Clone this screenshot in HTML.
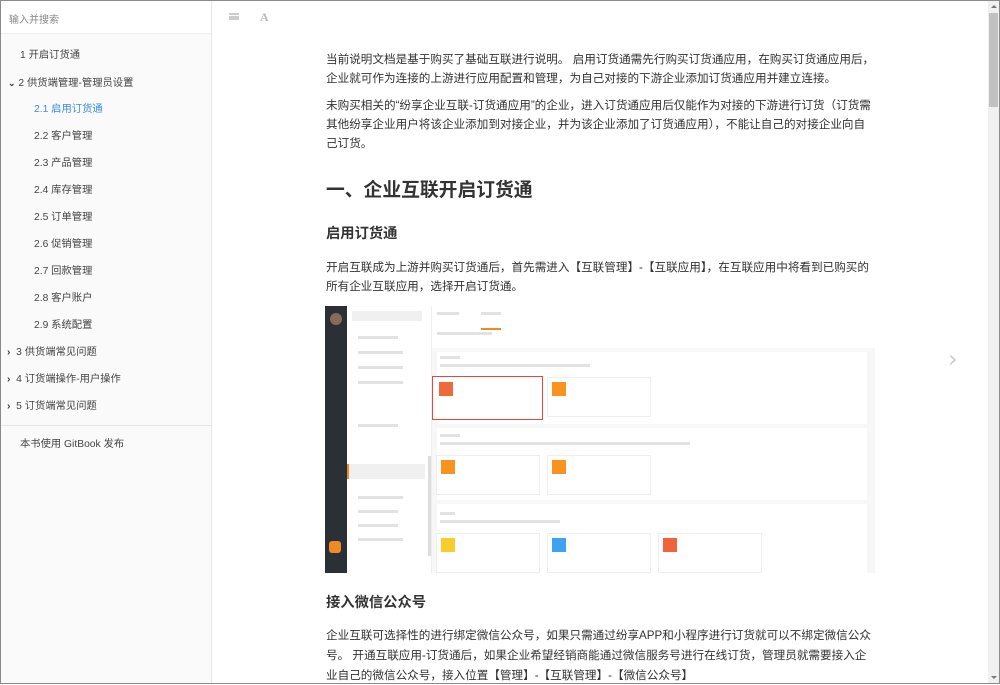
<!DOCTYPE html>
<html><head><meta charset="utf-8"><style>
*{margin:0;padding:0;box-sizing:border-box}
body{width:1000px;height:684px;overflow:hidden;background:#fff;font-family:"Liberation Sans","Noto Sans CJK SC",sans-serif;position:relative;color:#333}
.frame{position:absolute;inset:0;border:1px solid #8a8a8a;pointer-events:none;z-index:10}
.side{position:absolute;left:0;top:0;width:212px;height:684px;background:#fafafa;border-right:1px solid #e6e6e6}
.search{height:34px;background:#fff;border-bottom:1px solid #eee;font-size:10px;color:#888;padding:11px 0 0 9px}
.it{position:absolute;font-size:10.3px;color:#444;white-space:nowrap;line-height:16px}
.ab{position:absolute;white-space:nowrap}
.l{position:absolute;left:326px;font-size:11.6px;line-height:18px;white-space:nowrap;color:#333}
.sb{position:absolute;right:1px;top:1px;width:11px;height:682px;background:#f0f0f0}
.img div{position:absolute}
.g{background:#e2e2e2;height:3px}
</style></head><body>
<div class="side">
<div class="search">输入并搜索</div>
<div class="it" style="left:20px;top:48px">1 开启订货通</div>
<div class="it" style="left:8px;top:75px"><span style="font-size:9px;font-weight:bold">⌄</span> 2 供货端管理-管理员设置</div>
<div class="it" style="left:34px;top:102px;color:#3b8de0">2.1 启用订货通</div>
<div class="it" style="left:34px;top:129px">2.2 客户管理</div>
<div class="it" style="left:34px;top:156px">2.3 产品管理</div>
<div class="it" style="left:34px;top:183px">2.4 库存管理</div>
<div class="it" style="left:34px;top:210px">2.5 订单管理</div>
<div class="it" style="left:34px;top:237px">2.6 促销管理</div>
<div class="it" style="left:34px;top:264px">2.7 回款管理</div>
<div class="it" style="left:34px;top:291px">2.8 客户账户</div>
<div class="it" style="left:34px;top:318px">2.9 系统配置</div>
<div class="it" style="left:7px;top:345px"><b>›</b>&nbsp; 3 供货端常见问题</div>
<div class="it" style="left:7px;top:372px"><b>›</b>&nbsp; 4 订货端操作-用户操作</div>
<div class="it" style="left:7px;top:399px"><b>›</b>&nbsp; 5 订货端常见问题</div>
<div style="position:absolute;left:0;top:425px;width:212px;border-top:1px solid #e4e4e4"></div>
<div class="it" style="left:20px;top:437px">本书使用 GitBook 发布</div>
</div>
<div class="ab" style="left:229px;top:13px;width:10px;height:7px;border-top:2px solid #ccc;border-bottom:2px solid #ccc"><div style="margin-top:1px;border-top:2px solid #ccc"></div></div>
<div class="ab" style="left:260px;top:10px;font-family:'Liberation Serif',serif;font-size:12px;color:#bbb;font-weight:bold">A</div>

<div class="l" style="top:51px">当前说明文档是基于购买了基础互联进行说明。 启用订货通需先行购买订货通应用，在购买订货通应用后，</div>
<div class="l" style="top:70px">企业就可作为连接的上游进行应用配置和管理，为自己对接的下游企业添加订货通应用并建立连接。</div>
<div class="l" style="top:97px">未购买相关的“纷享企业互联-订货通应用”的企业，进入订货通应用后仅能作为对接的下游进行订货（订货需</div>
<div class="l" style="top:116px">其他纷享企业用户将该企业添加到对接企业，并为该企业添加了订货通应用），不能让自己的对接企业向自</div>
<div class="l" style="top:135px">己订货。</div>
<div class="l" style="top:178px;font-size:18.8px;line-height:24px;font-weight:bold">一、企业互联开启订货通</div>
<div class="l" style="top:225px;font-size:14.3px;line-height:18px;font-weight:bold">启用订货通</div>
<div class="l" style="top:259px">开启互联成为上游并购买订货通后，首先需进入【互联管理】-【互联应用】，在互联应用中将看到已购买的</div>
<div class="l" style="top:278px">所有企业互联应用，选择开启订货通。</div>

<div class="img" style="position:absolute;left:325px;top:306px;width:550px;height:267px;background:#fff;overflow:hidden">
<div style="left:0;top:0;width:22px;height:267px;background:#2b2f36"></div>
<div style="left:22px;top:0;width:85px;height:267px;background:#fff;border-right:1px solid #eee"></div>
<div style="left:27px;top:5px;width:70px;height:10px;background:#f0f0f0"></div>
<div class="g" style="left:33px;top:30px;width:40px"></div>
<div class="g" style="left:33px;top:45px;width:45px"></div>
<div class="g" style="left:33px;top:60px;width:45px"></div>
<div class="g" style="left:33px;top:75px;width:45px"></div>
<div class="g" style="left:33px;top:118px;width:40px"></div>
<div class="g" style="left:33px;top:190px;width:45px"></div>
<div class="g" style="left:33px;top:204px;width:40px"></div>
<div class="g" style="left:33px;top:218px;width:40px"></div>
<div class="g" style="left:33px;top:232px;width:45px"></div>
<div style="left:22px;top:158px;width:78px;height:15px;background:#f0f0f0;border-left:2px solid #f08a24"></div>
<div style="left:103px;top:150px;width:3px;height:100px;background:#ddd"></div>
<div style="left:107px;top:0;width:443px;height:267px;background:#f7f7f7"></div>
<div style="left:107px;top:0;width:443px;height:42px;background:#fff"></div>
<div class="g" style="left:112px;top:6px;width:22px"></div>
<div class="g" style="left:156px;top:6px;width:20px"></div>
<div style="left:156px;top:22px;width:20px;height:2px;background:#f08a24"></div>
<div class="g" style="left:112px;top:26px;width:55px"></div>
<div style="left:112px;top:46px;width:430px;height:72px;background:#fff"></div>
<div style="left:112px;top:122px;width:430px;height:72px;background:#fff"></div>
<div style="left:112px;top:198px;width:430px;height:69px;background:#fff"></div>
<div class="g" style="left:115px;top:50px;width:20px"></div>
<div class="g" style="left:115px;top:58px;width:150px"></div>
<div class="g" style="left:115px;top:128px;width:20px"></div>
<div class="g" style="left:115px;top:136px;width:250px"></div>
<div class="g" style="left:115px;top:206px;width:15px"></div>
<div class="g" style="left:115px;top:214px;width:120px"></div>
<div style="left:107px;top:70px;width:111px;height:44px;border:1px solid #e8453c;background:#fff"></div>
<div style="left:114px;top:76px;width:14px;height:14px;background:#ef6a3a"></div>
<div style="left:222px;top:71px;width:104px;height:40px;border:1px solid #eee;background:#fff"></div>
<div style="left:227px;top:76px;width:14px;height:14px;background:#f7931e"></div>
<div style="left:111px;top:149px;width:104px;height:40px;border:1px solid #eee;background:#fff"></div>
<div style="left:116px;top:154px;width:14px;height:14px;background:#f7931e"></div>
<div style="left:222px;top:149px;width:104px;height:40px;border:1px solid #eee;background:#fff"></div>
<div style="left:227px;top:154px;width:14px;height:14px;background:#f7931e"></div>
<div style="left:111px;top:227px;width:104px;height:40px;border:1px solid #eee;background:#fff"></div>
<div style="left:116px;top:232px;width:14px;height:14px;background:#f8cc2a"></div>
<div style="left:222px;top:227px;width:104px;height:40px;border:1px solid #eee;background:#fff"></div>
<div style="left:227px;top:232px;width:14px;height:14px;background:#3ea3ee"></div>
<div style="left:333px;top:227px;width:104px;height:40px;border:1px solid #eee;background:#fff"></div>
<div style="left:338px;top:232px;width:14px;height:14px;background:#f0643c"></div>
<div style="left:5px;top:7px;width:12px;height:12px;border-radius:50%;background:#8a6a55"></div>
<div style="left:4px;top:235px;width:12px;height:12px;background:#f08a24;border-radius:3px"></div>
</div>

<div class="l" style="top:594px;font-size:14.3px;line-height:18px;font-weight:bold">接入微信公众号</div>
<div class="l" style="top:627px">企业互联可选择性的进行绑定微信公众号，如果只需通过纷享APP和小程序进行订货就可以不绑定微信公众</div>
<div class="l" style="top:647px">号。 开通互联应用-订货通后，如果企业希望经销商能通过微信服务号进行在线订货，管理员就需要接入企</div>
<div class="l" style="top:667px">业自己的微信公众号，接入位置【管理】-【互联管理】-【微信公众号】</div>

<div class="ab" style="left:948px;top:345px;font-size:24px;color:#ccc;font-family:'DejaVu Sans',sans-serif">›</div>
<div class="sb"><div style="position:absolute;left:1px;top:12px;width:9px;height:94px;background:#c1c1c1"></div>
<div style="position:absolute;left:3px;top:4px;border:3px solid transparent;border-bottom:3px solid #777;border-top:0"></div>
<div style="position:absolute;left:3px;bottom:4px;border:3px solid transparent;border-top:3px solid #777;border-bottom:0"></div></div>
<div class="frame"></div>
</body></html>
